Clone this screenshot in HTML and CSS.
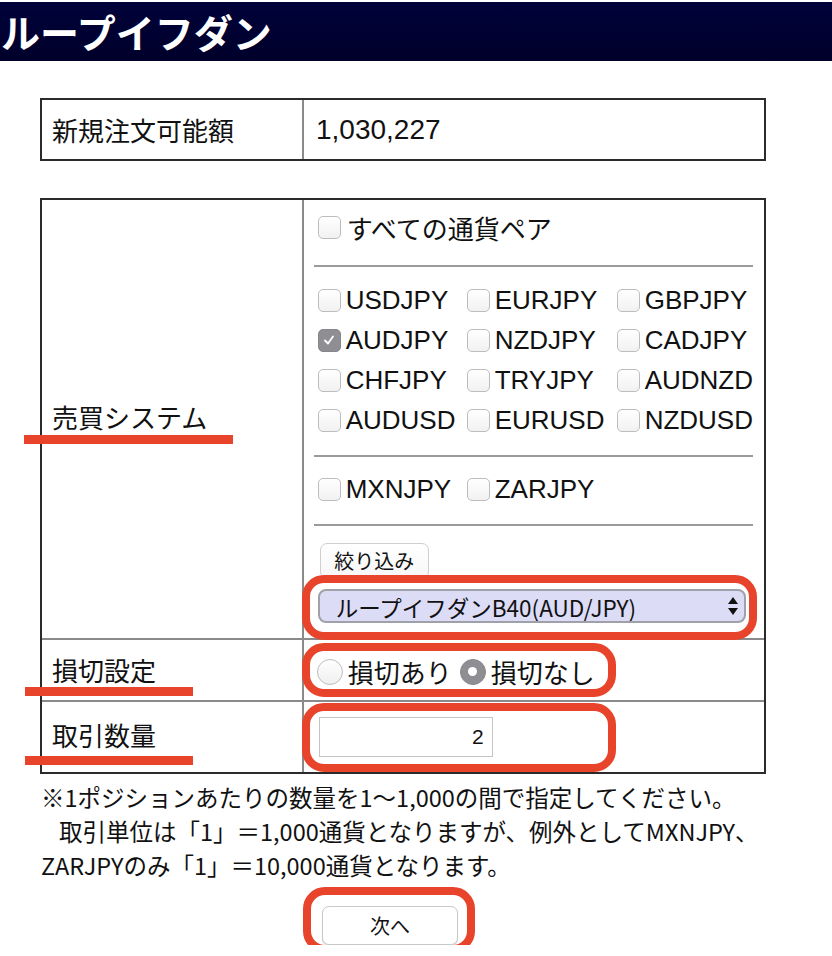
FILE: index.html
```html
<!DOCTYPE html>
<html lang="ja">
<head>
<meta charset="utf-8">
<title>ループイフダン</title>
<link rel="stylesheet" href="styles.css">
</head>
<body>
<header class="page-head">
  <h1 class="page-title">ループイフダン</h1>
</header>
<main class="page">
  <table class="grid-table info-table">
    <tr>
      <th class="label">新規注文可能額</th>
      <td class="value amount">1,030,227</td>
    </tr>
  </table>

  <form class="order-form">
    <table class="grid-table form-table">
      <tr class="row-system">
        <th class="label"><span class="mark mark-system">売買システム</span></th>
        <td class="value system-cell">
          <label class="check-line"><span class="cb"></span><span>すべての通貨ペア</span></label>
          <hr class="sep sep-first">
          <div class="pairs pairs-major">
            <label class="pair"><span class="cb"></span>USDJPY</label>
            <label class="pair"><span class="cb"></span>EURJPY</label>
            <label class="pair"><span class="cb"></span>GBPJPY</label>
            <label class="pair"><span class="cb cb-on"><svg width="14" height="14" viewBox="0 0 14 14"><path d="M3 7.5 L6 10.5 L11 3.5" fill="none" stroke="#fff" stroke-width="1.8" stroke-linecap="round" stroke-linejoin="round"/></svg></span>AUDJPY</label>
            <label class="pair"><span class="cb"></span>NZDJPY</label>
            <label class="pair"><span class="cb"></span>CADJPY</label>
            <label class="pair"><span class="cb"></span>CHFJPY</label>
            <label class="pair"><span class="cb"></span>TRYJPY</label>
            <label class="pair"><span class="cb"></span>AUDNZD</label>
            <label class="pair"><span class="cb"></span>AUDUSD</label>
            <label class="pair"><span class="cb"></span>EURUSD</label>
            <label class="pair"><span class="cb"></span>NZDUSD</label>
          </div>
          <hr class="sep">
          <div class="pairs pairs-minor">
            <label class="pair"><span class="cb"></span>MXNJPY</label>
            <label class="pair"><span class="cb"></span>ZARJPY</label>
          </div>
          <hr class="sep">
          <button type="button" class="btn btn-filter">絞り込み</button>
          <div class="select-wrap ring ring-select">
            <select class="system-select"><option>ループイフダンB40(AUD/JPY)</option></select>
            <svg class="select-arrows" width="10" height="18" viewBox="0 0 10 18"><path d="M5 0 L10 7 L0 7 Z M0 11 L10 11 L5 18 Z" fill="#111"/></svg>
          </div>
        </td>
      </tr>
      <tr class="row-stop">
        <th class="label"><span class="mark mark-stop">損切設定</span></th>
        <td class="value">
          <div class="radio-group ring ring-radio">
            <label class="radio-item"><span class="rb"></span>損切あり</label>
            <label class="radio-item"><span class="rb rb-on"></span>損切なし</label>
          </div>
        </td>
      </tr>
      <tr class="row-qty">
        <th class="label"><span class="mark mark-qty">取引数量</span></th>
        <td class="value">
          <span class="qty-wrap ring ring-qty"><input class="qty" type="text" value="2"></span>
        </td>
      </tr>
    </table>

    <p class="note">
      <span class="note-line">※1ポジションあたりの数量を1〜1,000の間で指定してください。</span>
      <span class="note-line note-indent">取引単位は「1」＝1,000通貨となりますが、例外としてMXNJPY、</span>
      <span class="note-line">ZARJPYのみ「1」＝10,000通貨となります。</span>
    </p>

    <div class="actions">
      <span class="next-wrap ring ring-next"><button type="button" class="btn btn-next">次へ</button></span>
    </div>
  </form>
</main>
</body>
</html>
```
FILE: styles.css
```css
* { box-sizing: border-box; }

html, body {
  margin: 0;
  padding: 0;
  background: #fff;
}

body {
  font-family: "Noto Sans CJK JP", "Liberation Sans", sans-serif;
  color: #111;
}

/* header */
.page-head {
  margin-top: 2px;
  height: 59px;
  background: linear-gradient(#00023a, #00002a);
  overflow: hidden;
}

.page-title {
  margin: 0;
  padding-left: 1px;
  color: #fff;
  font-size: 39px;
  font-weight: 700;
  line-height: 59px;
}

.page {
  padding-left: 40px;
}

/* tables */
.grid-table {
  width: 726px;
  border: 2px solid #2b2b2b;
  border-collapse: separate;
  border-spacing: 0;
}

.info-table { margin-top: 37px; }
.form-table { margin-top: 37px; }

.label {
  width: 262px;
  border-right: 2px solid #8a8a8a;
  text-align: left;
  font-weight: 400;
  font-size: 26px;
  padding: 0 0 0 10px;
  vertical-align: middle;
}

.value {
  padding: 0 11px 0 10px;
  vertical-align: middle;
}

.info-table .label,
.info-table .value { height: 59px; }

.amount {
  font-family: "Liberation Sans", sans-serif;
  font-size: 28px;
  padding-left: 12px;
}

.form-table tr + tr > * { border-top: 2px solid #8a8a8a; }

.row-system > * { height: 438px; }
.row-stop > * { height: 62px; }
.row-qty > * { height: 72px; }

.row-system .label { padding-bottom: 6px; }
.row-stop .label { padding-bottom: 2px; }
.row-qty .label { padding-bottom: 6px; }

/* red annotation underlines */
.mark {
  position: relative;
  display: inline-block;
  line-height: 36px;
}

.mark::after {
  content: "";
  position: absolute;
  height: 9px;
  background: #e8432b;
}

.mark-system::after { left: -28px; width: 209px; top: 36px; }
.mark-stop::after { left: -27px; width: 168px; top: 35px; }
.mark-qty::after { left: -27px; width: 168px; top: 39px; }

/* red annotation rings */
.ring { position: relative; }

.ring::after {
  content: "";
  position: absolute;
  border: 8px solid #e8432b;
  border-radius: 22px;
  pointer-events: none;
}

.ring-select::after { left: -16px; right: -11px; top: -14px; bottom: -17px; }
.ring-radio::after { left: -15px; right: -21px; top: -11px; bottom: -7px; }
.ring-qty::after { left: -17px; right: -123px; top: -14px; bottom: -15px; }
.ring-next::after { left: -19px; right: -17px; top: -19px; bottom: -8px; }

/* system cell */
.system-cell {
  vertical-align: top;
  padding-top: 7px;
}

.check-line {
  display: flex;
  align-items: center;
  height: 40px;
  margin-left: 4px;
  font-size: 26px;
}

.cb {
  flex: none;
  width: 23px;
  height: 23px;
  margin-right: 6px;
  border: 1px solid #bdbdbd;
  border-radius: 5px;
  background: linear-gradient(#fff, #f1f1f1);
}

.cb-on {
  display: flex;
  align-items: center;
  justify-content: center;
  background: #8e8e93;
  border-color: #86868b;
}

.sep {
  height: 0;
  margin: 15px 0 0;
  border: 0;
  border-top: 2px solid #9b9b9b;
}

.sep-first { margin-top: 18px; }

.pairs {
  display: grid;
  grid-template-columns: 149px 150px auto;
  grid-auto-rows: 40px;
  margin-left: 4px;
  font-family: "Liberation Sans", sans-serif;
  font-size: 26px;
}

.pairs-major { margin-top: 13px; }
.pairs-minor { margin-top: 12px; }

.pair {
  display: flex;
  align-items: center;
  white-space: nowrap;
}

.pair .cb { margin-right: 5px; }

/* buttons */
.btn {
  display: block;
  padding: 0;
  color: #111;
  font-family: "Noto Sans CJK JP", sans-serif;
  font-size: 20px;
  line-height: 1;
  border: 1px solid #cfcfcf;
  border-radius: 7px;
  background: linear-gradient(#fff, #f7f7f7);
}

.btn-filter {
  margin: 17px 0 0 6px;
  width: 109px;
  height: 36px;
}

/* select */
.select-wrap {
  display: block;
  width: 428px;
  height: 34px;
  margin: 10px 0 0 4px;
}

.system-select {
  appearance: none;
  -webkit-appearance: none;
  display: block;
  width: 100%;
  height: 34px;
  margin: 0;
  padding: 0 0 0 16px;
  border: 2px solid #a0a0a8;
  border-radius: 8px;
  background: #dcdcf7;
  color: #111;
  font-family: "Noto Sans CJK JP", sans-serif;
  font-size: 22.5px;
}

.select-arrows {
  position: absolute;
  right: 8px;
  top: 8px;
  pointer-events: none;
}

/* radios */
.radio-group {
  display: inline-flex;
  align-items: center;
  height: 36px;
  margin: 3px 0 0 3px;
  font-size: 26px;
}

.radio-item {
  display: flex;
  align-items: center;
  white-space: nowrap;
}

.radio-item + .radio-item { margin-left: 8px; }

.rb {
  position: relative;
  flex: none;
  width: 26px;
  height: 26px;
  margin-right: 5px;
  border: 1px solid #bdbdbd;
  border-radius: 50%;
  background: linear-gradient(#fff, #efefef);
}

.rb-on {
  background: #8e8e93;
  border-color: #86868b;
}

.rb-on::after {
  content: "";
  position: absolute;
  left: 50%;
  top: 50%;
  width: 9px;
  height: 9px;
  margin: -4.5px 0 0 -4.5px;
  border-radius: 50%;
  background: #fff;
}

/* quantity */
.qty-wrap {
  display: inline-block;
  vertical-align: middle;
  margin-left: 5px;
}

.qty {
  display: block;
  width: 174px;
  height: 40px;
  margin: 0;
  padding: 0 8px 0 0;
  border: 1px solid #c4c4c4;
  text-align: right;
  font-family: "Liberation Sans", sans-serif;
  font-size: 21px;
  color: #111;
}

/* note */
.note {
  margin: 6px 0 0 1px;
  font-size: 23.5px;
  line-height: 34px;
}

.note-line {
  display: block;
  white-space: nowrap;
}

.note-indent { padding-left: 18px; }

/* actions */
.actions {
  margin-top: 24px;
  padding-left: 282px;
}

.next-wrap { display: inline-block; }

.btn-next {
  width: 136px;
  height: 39px;
  border-color: #c9c9c9;
  background: #fff;
  box-shadow: 0 1px 1px rgba(0, 0, 0, 0.15);
}
```
